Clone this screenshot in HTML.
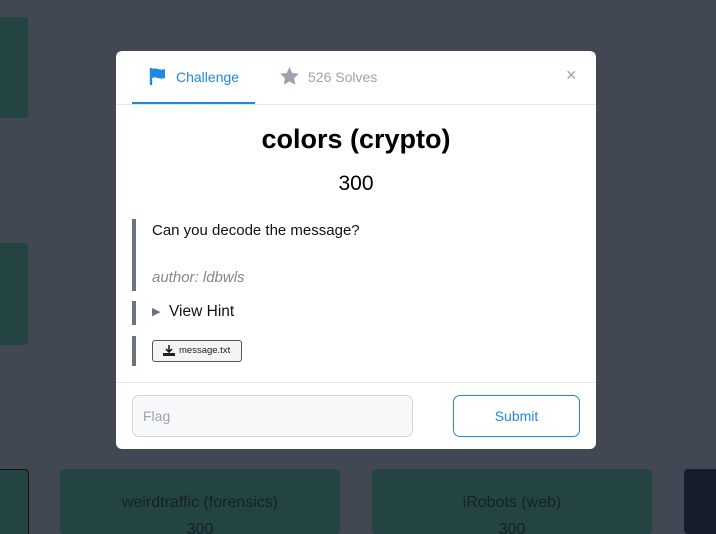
<!DOCTYPE html><html style="overflow:hidden;height:534px"><head><style>
body{margin:0;width:716px;height:534px;background:#414753;position:relative;overflow:hidden;font-family:"Liberation Sans",sans-serif}
.c{position:absolute;background:#244444;border-radius:4px}
.m{position:absolute;left:116px;top:51px;width:480px;height:398px;background:#fff;border-radius:6px}
.a{position:absolute}
.bar{position:absolute;left:16px;width:4px;background:#6b7280}
</style></head><body>
<div class="c" style="left:-4px;top:17px;width:32px;height:101px"></div>
<div class="c" style="left:-4px;top:243px;width:32px;height:102px"></div>
<div class="c" style="left:-4px;top:469px;width:31px;height:70px;border:1px solid #111;"></div>
<div class="c" style="left:60px;top:469px;width:280px;height:65px"><div style="text-align:center;margin-top:25px;font-size:16px;color:#16202a">weirdtraffic (forensics)</div><div style="text-align:center;margin-top:9px;font-size:16px;color:#16202a">300</div></div>
<div class="c" style="left:372px;top:469px;width:280px;height:65px"><div style="text-align:center;margin-top:25px;font-size:16px;color:#16202a">iRobots (web)</div><div style="text-align:center;margin-top:9px;font-size:16px;color:#16202a">300</div></div>
<div class="c" style="left:684px;top:469px;width:40px;height:65px;background:#151d2b"></div>
<div class="m">
<svg class="a" style="left:33px;top:16px" width="18" height="18" viewBox="0 0 18 18"><path d="M2 1v17" stroke="#1e88e5" stroke-width="2.4"/><path d="M3 2c4-2 7 2 13 0v9c-6 2-9-2-13 0z" fill="#1e88e5"/></svg>
<div class="a" style="left:60px;top:18px;font-size:14px;color:#1e88e5">Challenge</div>
<svg class="a" style="left:164px;top:16px" width="19" height="18" viewBox="0 0 24 23"><path d="M12 0l3.6 7.6 8.4 1-6.2 5.8 1.6 8.3L12 18.6 4.6 22.7l1.6-8.3L0 8.6l8.4-1z" fill="#9ca3af"/></svg>
<div class="a" style="left:192px;top:18px;font-size:14px;color:#9ca3af">526 Solves</div>
<div class="a" style="left:450px;top:14px;font-size:18px;color:#9ca3af">×</div>
<div class="a" style="left:16px;top:51px;width:123px;height:3px;background:#1e88e5"></div>
<div class="a" style="left:0;top:53px;width:480px;height:1px;background:#e5e7eb"></div>
<div class="a" style="left:0;top:73px;width:480px;text-align:center;font-size:27px;font-weight:bold;color:#000">colors (crypto)</div>
<div class="a" style="left:0;top:121px;width:480px;text-align:center;font-size:21px;color:#000">300</div>
<div class="bar" style="top:168px;height:72px"></div>
<div class="a" style="left:36px;top:171px;font-size:15px;color:#111">Can you decode the message?</div>
<div class="a" style="left:36px;top:218px;font-size:15px;font-style:italic;color:#888">author: ldbwls</div>
<div class="bar" style="top:250px;height:24px"></div>
<div class="a" style="left:36px;top:254px;font-size:11px;color:#6b7280">▶</div>
<div class="a" style="left:53px;top:252px;font-size:15.5px;color:#111">View Hint</div>
<div class="bar" style="top:285px;height:30px"></div>
<div class="a" style="left:36px;top:289px;width:88px;height:20px;border:1px solid #555;border-radius:3px;background:#f3f4f6;font-size:9.5px;color:#222;line-height:20px"><svg style="position:absolute;left:10px;top:4px" width="12" height="11" viewBox="0 0 12 11"><path d="M6 0v6M3 4l3 3 3-3" stroke="#222" stroke-width="1.6" fill="none"/><path d="M0 8h12v3H0z" fill="#222"/></svg><span style="position:absolute;left:26px">message.txt</span></div>
<div class="a" style="left:0;top:331px;width:480px;height:1px;background:#e5e7eb"></div>
<div class="a" style="left:16px;top:344px;width:279px;height:40px;border:1px solid #d1d5db;border-radius:7px;background:#f7f8fa"></div>
<div class="a" style="left:27px;top:357px;font-size:14px;color:#9ca3af">Flag</div>
<div class="a" style="left:337px;top:344px;width:125px;height:40px;border:1px solid #1e88e5;border-radius:7px;text-align:center;line-height:40px;font-size:14px;color:#1e88e5">Submit</div>
</div>
</body></html>
